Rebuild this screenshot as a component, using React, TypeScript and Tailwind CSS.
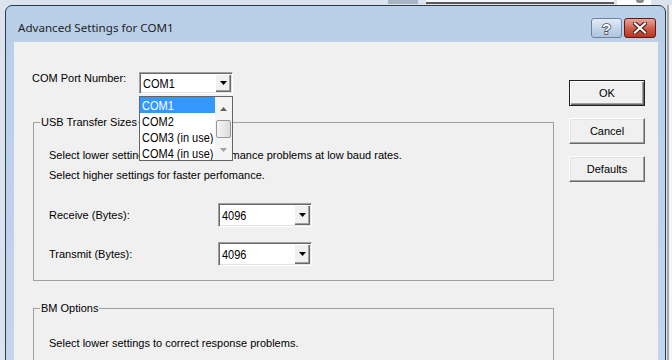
import React from "react";

const COM_OPTIONS = ["COM1", "COM2", "COM3 (in use)", "COM4 (in use)"];

function DownTriangle({ color = "#000" }: { color?: string }) {
  return (
    <svg width="7" height="4" viewBox="0 0 7 4">
      <path d="M0 0h7L3.5 4z" fill={color} />
    </svg>
  );
}

function UpTriangle({ color = "#606060" }: { color?: string }) {
  return (
    <svg width="7" height="4" viewBox="0 0 7 4">
      <path d="M0 4h7L3.5 0z" fill={color} />
    </svg>
  );
}

function Combo({ value, tall }: { value: string; tall?: boolean }) {
  return (
    <div
      className={`flex w-[94px] ${tall ? "h-[24px]" : "h-[22px]"} border border-t-[#a0a0a0] border-l-[#a0a0a0] border-b-[#ffffff] border-r-[#ffffff] bg-white shadow-[inset_1px_1px_0_#696969,inset_-1px_-1px_0_#e3e3e3]`}
    >
      <div className="flex flex-1 items-center pl-[3px] text-[11px] text-black">
        <span className="inline-block origin-left scale-y-[1.15]">{value}</span>
      </div>
      <div className="my-[1px] mr-[1px] flex w-[16px] items-center justify-center bg-[#f0f0f0] shadow-[inset_1px_1px_0_#fff,inset_-1px_-1px_0_#696969,inset_-2px_-2px_0_#a0a0a0]">
        <DownTriangle />
      </div>
    </div>
  );
}

function GroupBox({
  title,
  className,
  children,
}: {
  title: string;
  className?: string;
  children: React.ReactNode;
}) {
  return (
    <div className={`relative border border-[#a0a0a0] ${className ?? ""}`}>
      <span className="absolute -top-[7px] left-[6px] bg-[#f0f0f0] px-[1px] text-[11px] leading-[13px] text-black">
        {title}
      </span>
      {children}
    </div>
  );
}

function DialogButton({ label, isDefault }: { label: string; isDefault?: boolean }) {
  return (
    <div
      className={`flex h-[26px] w-[76px] items-center justify-center bg-[#f0f0f0] text-[11px] text-black ${
        isDefault
          ? "border border-[#202020] shadow-[inset_1px_1px_0_#fff,inset_-1px_-1px_0_#696969,inset_-2px_-2px_0_#a0a0a0]"
          : "border border-t-[#ffffff] border-l-[#ffffff] border-b-[#696969] border-r-[#696969] shadow-[inset_-1px_-1px_0_#a0a0a0,inset_1px_1px_0_#e3e3e3]"
      }`}
    >
      {label}
    </div>
  );
}

function ComDropdown() {
  return (
    <div className="absolute left-0 top-[24px] z-10 flex h-[65px] w-[94px] border border-[#646464] bg-white">
      <div className="flex flex-1 flex-col overflow-hidden">
        {COM_OPTIONS.map((opt, i) => (
          <div
            key={opt}
            className={`flex h-[16px] shrink-0 items-center pl-[2px] text-[11px] whitespace-nowrap ${
              i === 0 ? "bg-[#3399ff] text-white" : "text-black"
            }`}
          >
            <span className="inline-block scale-y-[1.15]">{opt}</span>
          </div>
        ))}
      </div>
      <div className="flex w-[17px] flex-col bg-[#f4f4f4]">
        <div className="flex h-[22px] items-center justify-center pt-[2px]">
          <UpTriangle />
        </div>
        <div className="mx-[1px] mt-[1px] h-[18px] rounded-[2px] border border-[#979797] bg-gradient-to-r from-[#f5f5f5] to-[#dcdcdc]" />
        <div className="flex flex-1 items-center justify-center pt-[2px]">
          <DownTriangle color="#a0a0a0" />
        </div>
      </div>
    </div>
  );
}

export default function App() {
  return (
    <div className="relative h-[360px] w-[672px] overflow-hidden bg-[#dbe4ee] font-['Liberation_Sans',Arial,sans-serif]">
      {/* windows behind the dialog */}
      <div className="absolute left-[388px] top-0 h-[4px] w-[30px] bg-[#a9b5c3]" />
      <div className="absolute left-[426px] top-0 h-[4px] w-[188px] border-b-2 border-[#5a5a5a] bg-[#f4f6f8]" />
      <div className="absolute left-[617px] top-0 h-[5px] w-[34px] bg-white">
        <div className="ml-[19px] h-[3px] w-[8px] rounded-b-full bg-[#8a8a8a]" />
      </div>
      <div className="absolute left-[667px] top-[5px] h-[360px] w-[5px] border-l-2 border-[#a8a8a8] bg-[#f2f4f6]" />

      {/* dialog window */}
      <div className="absolute left-[5px] top-[5px] flex h-[420px] w-[661px] flex-col rounded-t-[7px] border border-[#2c3a4a] bg-gradient-to-b from-[#b9cfe8] to-[#c3d7ee]">
        <div className="flex h-[36px] shrink-0 justify-between">
          <span className="pl-[12px] pt-[14px] font-['Noto_Sans',sans-serif] text-[11.6px] leading-[16px] text-[#1e1e1e]">
            Advanced Settings for COM1
          </span>
          <div className="mr-[9px] mt-[12px] flex h-[20px] gap-[2px]">
            <div className="flex w-[31px] items-center justify-center rounded-[3px] border border-[#6e829b] bg-gradient-to-b from-[#e3ecf7] via-[#c6d6ea] to-[#aec4df]">
              <span className="font-['Liberation_Sans',Arial,sans-serif] text-[15px] font-bold leading-none text-white [-webkit-text-stroke:1.5px_#3a4758] [paint-order:stroke_fill]">
                ?
              </span>
            </div>
            <div className="flex w-[32px] items-center justify-center rounded-[3px] border border-[#5b1a12] bg-gradient-to-b from-[#e6a89d] via-[#d2604e] to-[#b8321f]">
              <svg width="14" height="12" viewBox="0 0 14 12">
                <path
                  d="M2 1.5L12 10.5M12 1.5L2 10.5"
                  stroke="#3b1510"
                  strokeWidth="4.2"
                  strokeLinecap="square"
                />
                <path
                  d="M2 1.5L12 10.5M12 1.5L2 10.5"
                  stroke="#ffffff"
                  strokeWidth="2.2"
                  strokeLinecap="square"
                />
              </svg>
            </div>
          </div>
        </div>

        {/* client area */}
        <div className="ml-[8px] mr-[7px] flex flex-1 bg-[#f0f0f0] text-black">
          <div className="ml-[19px] flex w-[521px] flex-col">
            <div className="mt-[30px] flex h-[22px] items-start">
              <span className="-ml-[1px] w-[107px] text-[11px] leading-[13px]">
                COM Port Number:
              </span>
              <div className="relative">
                <Combo value="COM1" />
                <ComDropdown />
              </div>
            </div>

            <GroupBox title="USB Transfer Sizes" className="mt-[28px] pb-[14px] pl-[15px] pt-[22px]">
              <p className="text-[11px] leading-[20px]">
                Select lower settings to correct performance problems at low baud rates.
              </p>
              <p className="text-[11px] leading-[20px]">
                Select higher settings for faster perfomance.
              </p>
              <div className="mt-[18px] flex items-center">
                <span className="w-[169px] text-[11px]">Receive (Bytes):</span>
                <Combo value="4096" tall />
              </div>
              <div className="mt-[15px] flex items-center">
                <span className="w-[169px] text-[11px]">Transmit (Bytes):</span>
                <Combo value="4096" tall />
              </div>
            </GroupBox>

            <GroupBox title="BM Options" className="mt-[27px] pb-[40px] pl-[15px] pt-[24px]">
              <p className="text-[11px] leading-[20px]">
                Select lower settings to correct response problems.
              </p>
            </GroupBox>
          </div>

          <div className="ml-[15px] flex flex-col gap-[12px] pt-[38px]">
            <DialogButton label="OK" isDefault />
            <DialogButton label="Cancel" />
            <DialogButton label="Defaults" />
          </div>
        </div>
      </div>
    </div>
  );
}
